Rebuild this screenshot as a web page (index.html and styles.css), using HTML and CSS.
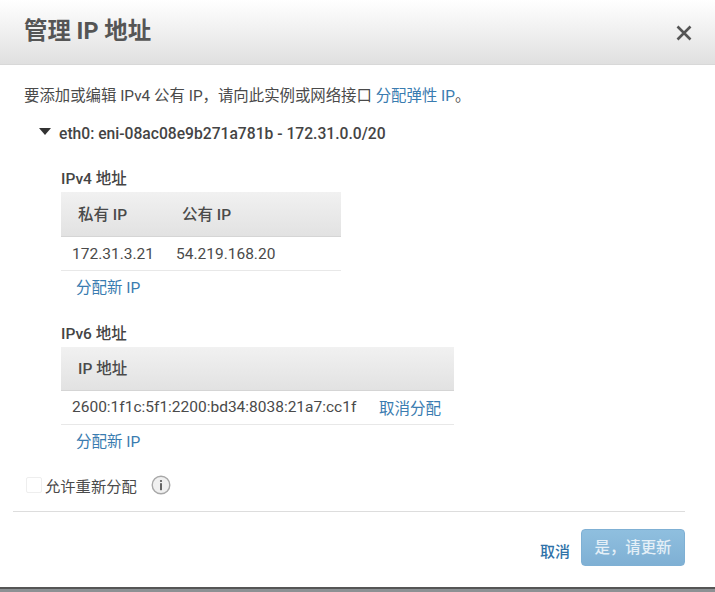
FILE: index.html
```html
<!DOCTYPE html>
<html lang="zh-CN">
<head>
<meta charset="utf-8">
<title>管理 IP 地址</title>
<link rel="stylesheet" href="styles.css">
</head>
<body>
<div class="dialog">
  <header class="head">
    <h1 class="title">管理 IP 地址</h1>
    <svg class="close" width="16" height="16" viewBox="0 0 16 16"><path d="M1.5 1.5L14.5 14.5M14.5 1.5L1.5 14.5" stroke="#555" stroke-width="2.6" fill="none"/></svg>
  </header>
  <main class="body">
    <p class="intro">要添加或编辑 IPv4 公有 IP，请向此实例或网络接口 <a class="link">分配弹性 IP</a>。</p>
    <div class="eni">
      <svg class="caret" width="12" height="7" viewBox="0 0 12 7"><path d="M0 0H12L6 7Z" fill="#333"/></svg>
      <span>eth0: eni-08ac08e9b271a781b - 172.31.0.0/20</span>
    </div>
    <section class="block first">
      <h2 class="label">IPv4 地址</h2>
      <div class="table v4">
        <div class="thead"><span class="th col-a">私有 IP</span><span class="th">公有 IP</span></div>
        <div class="row"><span class="col-b">172.31.3.21</span><span>54.219.168.20</span></div>
      </div>
      <a class="link assign">分配新 IP</a>
    </section>
    <section class="block second">
      <h2 class="label">IPv6 地址</h2>
      <div class="table v6">
        <div class="thead"><span class="th">IP 地址</span></div>
        <div class="row"><span class="col-c">2600:1f1c:5f1:2200:bd34:8038:21a7:cc1f</span><a class="link">取消分配</a></div>
      </div>
      <a class="link assign">分配新 IP</a>
    </section>
    <div class="allow">
      <span class="check"></span>
      <span class="allow-text">允许重新分配</span>
      <svg class="info" width="20" height="20" viewBox="0 0 20 20"><circle cx="10" cy="10" r="8.8" fill="#f0f0f0" stroke="#a8a8a8" stroke-width="1.4"/><circle cx="10" cy="6" r="1.1" fill="#555"/><rect x="9.1" y="8.2" width="1.8" height="7" fill="#555"/></svg>
    </div>
  </main>
  <footer class="foot">
    <a class="cancel">取消</a>
    <button class="confirm" type="button">是，请更新</button>
  </footer>
</div>
<div class="strip"></div>
</body>
</html>
```

FILE: styles.css
```css
* { box-sizing: border-box; }
html, body { margin: 0; padding: 0; }
body {
  width: 715px;
  height: 592px;
  overflow: hidden;
  background: #fff;
  font-family: Roboto, "Noto Sans CJK SC", sans-serif;
  font-size: 15.5px;
  color: #4a4a4a;
  display: flex;
  flex-direction: column;
}
.dialog { flex: 1; display: flex; flex-direction: column; }
.head {
  height: 65px;
  flex: none;
  padding: 0 24px;
  display: flex;
  align-items: center;
  justify-content: space-between;
  background: linear-gradient(#fff, #e0e0e0);
  border-bottom: 1px solid #d8d8d8;
}
.title { margin: 0 0 3px; font-size: 23.4px; font-weight: 700; color: #555; line-height: 30px; }
.close { margin-right: -1px; margin-top: 2px; }
.body { padding: 0 13px 0 24px; flex: none; }
.intro { margin: 21px 0 0; line-height: 20px; font-size: 15.4px; }
.link { color: #3a7cb0; }
.eni {
  margin: 17px 0 0 15px;
  display: flex;
  align-items: center;
  gap: 8px;
  height: 20px;
  font-weight: 500;
  font-size: 15.65px;
  color: #444;
}
.caret { margin-top: -3px; }
.block { margin-left: 37px; }
.first { margin-top: 27px; }
.second { margin-top: 26px; }
.label { margin: 0; font-size: 15.5px; font-weight: 500; line-height: 18px; color: #444; }
.table { margin-top: 4px; }
.v4 { width: 280px; }
.v6 { width: 393px; }
.thead {
  height: 45px;
  display: flex;
  align-items: center;
  padding: 0 0 3px 17px;
  background: linear-gradient(#f1f1f1, #e2e2e2);
  border-bottom: 1px solid #d5d5d5;
}
.v6 .thead { height: 44px; }
.th { font-weight: 500; }
.col-a { width: 104px; }
.row {
  height: 34px;
  display: flex;
  align-items: center;
  padding-left: 11px;
  border-bottom: 1px solid #e8e8e8;
}
.v6 .row { padding-bottom: 2px; }
.col-b { width: 104px; }
.col-c { width: 307px; }
.assign { display: block; margin: 6px 0 0 15px; line-height: 22px; }
.allow { margin-top: 22px; margin-left: 2px; display: flex; align-items: center; height: 20px; }
.check { width: 16px; height: 16px; border: 1px solid #eee; border-radius: 2px; }
.allow-text { margin-left: 3px; font-size: 15.3px; }
.info { margin-left: 14px; }
.foot {
  margin: 16px 30px 0 13px;
  padding-top: 17px;
  border-top: 1px solid #ddd;
  display: flex;
  justify-content: flex-end;
  align-items: center;
}
.cancel { color: #2f72a8; font-weight: 500; font-size: 15px; margin: 5px 11px 0 0; }
.confirm {
  width: 104px;
  height: 37px;
  padding: 0 0 3px;
  border: 1px solid #7fb0d4;
  border-radius: 4px;
  background: linear-gradient(#8fbfdf, #7fb0d4);
  color: #e4eff7;
  font: 500 15.4px Roboto, "Noto Sans CJK SC", sans-serif;
}
.strip { height: 5px; flex: none; background: #8d9194; border-top: 2px solid #555; }
```
